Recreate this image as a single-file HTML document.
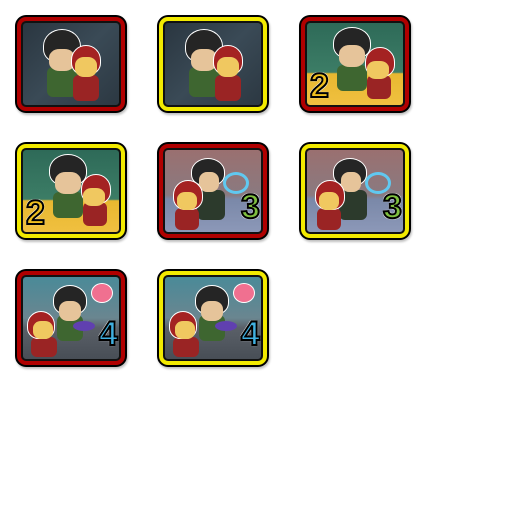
<!DOCTYPE html>
<html><head><style>
body{margin:0;width:512px;height:512px;background:#fff;position:relative;overflow:hidden;font-family:"Liberation Sans",sans-serif}
.ic{position:absolute;width:112px;height:98px;background:#000;border-radius:11px;box-shadow:1px 2px 2px rgba(0,0,0,.25)}
.fr{position:absolute;left:2px;top:2px;right:2px;bottom:2px;border-radius:9px}
.r .fr{background:#b00000}
.y .fr{background:#f2ea00}
.sc{position:absolute;left:6px;top:6px;width:100px;height:86px;border:2px solid #111;border-radius:5px;overflow:hidden;box-sizing:border-box}
.sc div{position:absolute}
.a .sc{background:linear-gradient(135deg,#2a3640,#3a4a56 50%,#2c3842)}
.b .sc{background:linear-gradient(#2e6a58 0,#3c7d66 60%,#e8b830 62%,#f0c040)}
.c .sc{background:linear-gradient(#9a7070 0,#8a7a80 55%,#7a88a8 60%,#8c98b8)}
.d .sc{background:linear-gradient(#4a8a98 0,#6a8690 50%,#5a6068 62%,#484e56)}
.hair{background:#252525;border-radius:50% 50% 40% 40%;border:1.5px solid #fff}
.face{background:#e6c49a;border-radius:40%}
.hood{background:#a42222;border-radius:50% 50% 40% 40%;border:1.5px solid #fff}
.bl{background:#f0c860;border-radius:40%}
.gb{background:#3e6630;border-radius:6px}
.rb{background:#9a2424;border-radius:6px}
.num{font-weight:bold;font-size:34px;line-height:34px;-webkit-text-stroke:2px #000;text-shadow:0 0 2px #fff,1px 1px 0 #fff,-1px -1px 0 #fff,1px -1px 0 #fff,-1px 1px 0 #fff}
</style></head><body>

<div class="ic r a" style="left:15px;top:15px"><div class="fr"></div><div class="sc">
<div class="gb" style="left:24px;top:44px;width:30px;height:30px"></div>
<div class="rb" style="left:50px;top:52px;width:26px;height:26px"></div>
<div class="hair" style="left:20px;top:6px;width:36px;height:32px"></div>
<div class="face" style="left:26px;top:26px;width:26px;height:22px"></div>
<div class="hood" style="left:48px;top:22px;width:28px;height:28px"></div>
<div class="bl" style="left:52px;top:34px;width:22px;height:20px"></div>
</div></div>
<div class="ic y a" style="left:157px;top:15px"><div class="fr"></div><div class="sc">
<div class="gb" style="left:24px;top:44px;width:30px;height:30px"></div>
<div class="rb" style="left:50px;top:52px;width:26px;height:26px"></div>
<div class="hair" style="left:20px;top:6px;width:36px;height:32px"></div>
<div class="face" style="left:26px;top:26px;width:26px;height:22px"></div>
<div class="hood" style="left:48px;top:22px;width:28px;height:28px"></div>
<div class="bl" style="left:52px;top:34px;width:22px;height:20px"></div>
</div></div>
<div class="ic r b" style="left:299px;top:15px"><div class="fr"></div><div class="sc">
<div class="gb" style="left:30px;top:42px;width:30px;height:26px"></div>
<div class="rb" style="left:60px;top:52px;width:24px;height:24px"></div>
<div class="hair" style="left:26px;top:4px;width:36px;height:30px"></div>
<div class="face" style="left:32px;top:22px;width:26px;height:22px"></div>
<div class="hood" style="left:58px;top:24px;width:28px;height:28px"></div>
<div class="bl" style="left:60px;top:38px;width:22px;height:18px"></div>
<div class="num" style="left:3px;top:46px;color:#f0c020">2</div>
</div></div>

<div class="ic y b" style="left:15px;top:142px"><div class="fr"></div><div class="sc">
<div class="gb" style="left:30px;top:42px;width:30px;height:26px"></div>
<div class="rb" style="left:60px;top:52px;width:24px;height:24px"></div>
<div class="hair" style="left:26px;top:4px;width:36px;height:30px"></div>
<div class="face" style="left:32px;top:22px;width:26px;height:22px"></div>
<div class="hood" style="left:58px;top:24px;width:28px;height:28px"></div>
<div class="bl" style="left:60px;top:38px;width:22px;height:18px"></div>
<div class="num" style="left:3px;top:46px;color:#f0c020">2</div>
</div></div>
<div class="ic r c" style="left:157px;top:142px"><div class="fr"></div><div class="sc">
<div class="gb" style="left:32px;top:40px;width:28px;height:30px;background:#2c3a2c"></div>
<div class="hair" style="left:26px;top:8px;width:32px;height:26px"></div>
<div class="face" style="left:34px;top:22px;width:20px;height:20px"></div>
<div style="left:58px;top:22px;width:20px;height:16px;border-radius:50%;border:3px solid #60c8f0"></div>
<div class="rb" style="left:10px;top:58px;width:24px;height:22px"></div>
<div class="hood" style="left:8px;top:30px;width:28px;height:28px"></div>
<div class="bl" style="left:12px;top:42px;width:20px;height:18px"></div>
<div class="num" style="left:76px;top:40px;color:#80c040">3</div>
</div></div>
<div class="ic y c" style="left:299px;top:142px"><div class="fr"></div><div class="sc">
<div class="gb" style="left:32px;top:40px;width:28px;height:30px;background:#2c3a2c"></div>
<div class="hair" style="left:26px;top:8px;width:32px;height:26px"></div>
<div class="face" style="left:34px;top:22px;width:20px;height:20px"></div>
<div style="left:58px;top:22px;width:20px;height:16px;border-radius:50%;border:3px solid #60c8f0"></div>
<div class="rb" style="left:10px;top:58px;width:24px;height:22px"></div>
<div class="hood" style="left:8px;top:30px;width:28px;height:28px"></div>
<div class="bl" style="left:12px;top:42px;width:20px;height:18px"></div>
<div class="num" style="left:76px;top:40px;color:#80c040">3</div>
</div></div>

<div class="ic r d" style="left:15px;top:269px"><div class="fr"></div><div class="sc">
<div class="gb" style="left:34px;top:38px;width:26px;height:26px"></div>
<div class="hair" style="left:30px;top:8px;width:32px;height:28px"></div>
<div class="face" style="left:36px;top:24px;width:22px;height:20px"></div>
<div style="left:50px;top:44px;width:22px;height:10px;border-radius:50%;background:#6040b0"></div>
<div style="left:68px;top:6px;width:20px;height:18px;border-radius:50%;background:#f07090;border:1.5px solid #fff"></div>
<div class="rb" style="left:8px;top:60px;width:26px;height:20px"></div>
<div class="hood" style="left:4px;top:34px;width:26px;height:26px"></div>
<div class="bl" style="left:10px;top:44px;width:20px;height:18px"></div>
<div class="num" style="left:76px;top:40px;color:#40b0e0">4</div>
</div></div>
<div class="ic y d" style="left:157px;top:269px"><div class="fr"></div><div class="sc">
<div class="gb" style="left:34px;top:38px;width:26px;height:26px"></div>
<div class="hair" style="left:30px;top:8px;width:32px;height:28px"></div>
<div class="face" style="left:36px;top:24px;width:22px;height:20px"></div>
<div style="left:50px;top:44px;width:22px;height:10px;border-radius:50%;background:#6040b0"></div>
<div style="left:68px;top:6px;width:20px;height:18px;border-radius:50%;background:#f07090;border:1.5px solid #fff"></div>
<div class="rb" style="left:8px;top:60px;width:26px;height:20px"></div>
<div class="hood" style="left:4px;top:34px;width:26px;height:26px"></div>
<div class="bl" style="left:10px;top:44px;width:20px;height:18px"></div>
<div class="num" style="left:76px;top:40px;color:#40b0e0">4</div>
</div></div>

</body></html>
